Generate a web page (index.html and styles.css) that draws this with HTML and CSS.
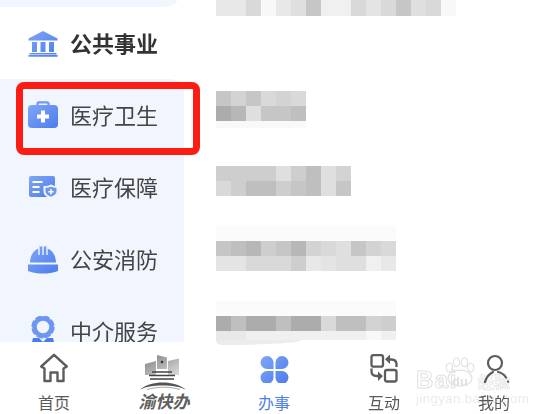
FILE: index.html
```html
<!DOCTYPE html>
<html lang="zh-CN">
<head>
<meta charset="utf-8">
<title>办事</title>
<link rel="stylesheet" href="styles.css">
</head>
<body>
<svg class="defs" width="0" height="0" aria-hidden="true">
  <defs>
    <linearGradient id="blue" x1="0" y1="0" x2="1" y2="1">
      <stop offset="0" stop-color="#7fa6f6"/>
      <stop offset="1" stop-color="#4c7cec"/>
    </linearGradient>
    <linearGradient id="grey" x1="0" y1="0" x2="1" y2="1">
      <stop offset="0" stop-color="#808080"/>
      <stop offset="1" stop-color="#dcdcdc"/>
    </linearGradient>
  </defs>
</svg>
<div class="app">
  <main class="main">
    <nav class="side">
      <div class="stub"></div>
      <a class="item item-active">
        <svg class="ico" viewBox="0 0 30 30"><path fill="url(#blue)" d="M15 3 29.500 10.500V12.500H.5V10.500ZM4 14h5v10H4ZM12.500 14h5v10h-5ZM21 14h5v10h-5ZM1.500 25h27v1.500h-27ZM.5 27h29v1.800H.5Z"/></svg>
        <span>公共事业</span>
      </a>
      <div class="rest">
        <a class="item">
          <svg class="ico" viewBox="0 0 30 30"><path fill="none" stroke="#6f98f3" stroke-width="2.200" d="M9.500 6V3.800a1.500 1.500 0 0 1 1.500-1.500h8a1.500 1.500 0 0 1 1.500 1.500V6"/><rect y="5" width="30" height="23" rx="4" fill="url(#blue)"/><path fill="#fff" d="M13 10.500h4v4h4v4h-4v4h-4v-4H9v-4h4Z"/></svg>
          <span>医疗卫生</span>
        </a>
        <a class="item">
          <svg class="ico" viewBox="0 0 30 30"><rect x="1" y="4" width="26" height="21" rx="2" fill="url(#blue)"/><path fill="#fff" d="M4.500 9h10v2h-10ZM4.500 14h7v2h-7ZM4.500 19h7v2h-7Z"/><path fill="#6d96f2" stroke="#f1f5fd" stroke-width="2" d="M23 13.500c2 1.500 4 1.500 6.500 1.500v4.500c0 3-3 5-6.500 6.500-3.500-1.500-6.500-3.500-6.500-6.500V15c2.500 0 4.500 0 6.500-1.500Z"/><path fill="#fff" d="M22.300 17h1.400v2h2v1.400h-2v2h-1.400v-2h-2V19h2Z"/></svg>
          <span>医疗保障</span>
        </a>
        <a class="item">
          <svg class="ico" viewBox="0 0 30 30"><path fill="url(#blue)" d="M2 18.500C2 11 6.500 5.500 11 4.500V2.500h8v2c4.500 1 9 6.500 9 14ZM0 20.500h30V27c-5 2-10 2.500-15 2.500S5 29 0 27Z"/><path stroke="#f1f5fd" stroke-width="1.400" d="M11 3v8M15 2v9M19 3v8"/></svg>
          <span>公安消防</span>
        </a>
        <a class="item">
          <svg class="ico" viewBox="0 0 30 30"><circle cx="15" cy="11" r="8.500" fill="none" stroke="#6d96f2" stroke-width="4.500"/><circle cx="15" cy="11" r="10.800" fill="none" stroke="#6d96f2" stroke-width="1.800" stroke-dasharray="6.500 2"/><path fill="#4c7cec" d="M5 22h6l4 4 4-4h6l2 8H3Z"/></svg>
          <span>中介服务</span>
        </a>
      </div>
    </nav>
    <section class="blurred" aria-label="已打码内容">
      <div class="row row-first"><i class="s10"></i><i class="s10"></i><i class="s7"></i><i class="s12"></i><i class="s10"></i><i class="s8"></i><i class="s4"></i><i class="s11"></i><i class="s11"></i><i class="s7"></i><i class="s9"></i><i class="s7"></i><i class="s4"></i><i class="s8"></i><i class="s7"></i><i class="s12"></i></div>
      <div class="row row-second"><i class="s4"></i><i class="s6"></i><i class="s4"></i><i class="s7"></i><i class="s6"></i><i class="s7"></i><i class="s1"></i><i class="s2"></i><i class="s8"></i><i class="s4"></i><i class="s4"></i><i class="s3"></i></div>
      <div class="row row-third"><i class="s5"></i><i class="s5"></i><i class="s5"></i><i class="s5"></i><i class="s8"></i><i class="s5"></i><i class="s3"></i><i class="s8"></i><i class="s6"></i><i class="s7"></i><i class="s5"></i><i class="s3"></i><i class="s3"></i><i class="s5"></i><i class="s4"></i><i class="s3"></i><i class="s8"></i><i class="s4"></i></div>
      <div class="row row-before"><i class="s4"></i><i class="s3"></i><i class="s2"></i><i class="s5"></i><i class="s4"></i><i class="s2"></i><i class="s6"></i><i class="s7"></i><i class="s8"></i><i class="s4"></i><i class="s6"></i><i class="s7"></i><i class="s9"></i><i class="s9"></i><i class="s7"></i><i class="s7"></i><i class="s7"></i><i class="s5"></i><i class="s10"></i><i class="s9"></i><i class="s8"></i><i class="s8"></i><i class="s11"></i><i class="s10"></i></div>
      <div class="row row-before row-last"><i class="s1"></i><i class="s3"></i><i class="s1"></i><i class="s1"></i><i class="s3"></i><i class="s1"></i><i class="s1"></i><i class="s7"></i><i class="s3"></i><i class="s3"></i><i class="s6"></i><i class="s5"></i></div>
      <div class="row row-thin"><i class="s10"></i><i class="s10"></i><i class="s11"></i><i class="s11"></i><i class="s11"></i><i class="s11"></i><i class="s11"></i><i class="s11"></i><i class="s11"></i><i class="s11"></i><i class="s12"></i><i class="s11"></i></div>
      <div class="tail"></div>
    </section>
  </main>
  <footer class="tabs">
    <a class="tab">
      <svg class="tab-ico" width="30" height="30" viewBox="0 0 30 30"><path fill="none" stroke="#5c5c5c" stroke-width="2.400" stroke-linejoin="round" d="M15 1.800 27.800 13.500 24.500 15.500V28H18.500V19.500H11.500V28H5.500V15.500L2.200 13.500Z"/></svg>
      <span class="tab-label">首页</span>
    </a>
    <a class="tab tab-logo">
      <svg class="logo" width="52" height="38" viewBox="0 0 52 38"><path fill="url(#grey)" d="M7 10 18 7V21H7ZM19 1 29 3.500V15H19ZM30 7 41 4.500V21H30Z"/><circle cx="24" cy="8" r="1.300" fill="#333"/><path fill="none" stroke="#444" stroke-width="1.600" d="M14 18h20M11 21.500h26M12 25h24"/><path fill="#555" d="M2 35.500C13 26 36 26 48 35.500 36 30 13 30 2 35.500Z"/><path fill="none" stroke="#aaa" d="M9 35.500C19 32.500 32 32.500 42 35.500"/></svg>
      <span class="logo-text">渝快办</span>
    </a>
    <a class="tab tab-active">
      <svg class="tab-ico" width="30" height="30" viewBox="0 0 30 30"><path fill="url(#blue)" d="M14 14H8A6.500 6.500 0 1 1 14 8ZM16 14V8A6.500 6.500 0 1 1 22 14ZM14 16V22A6.500 6.500 0 1 1 8 16ZM16 16H22A6.500 6.500 0 1 1 16 22Z" transform="translate(.5 2)"/></svg>
      <span class="tab-label">办事</span>
    </a>
    <a class="tab">
      <svg class="tab-ico" width="30" height="30" viewBox="0 0 30 30"><g fill="none" stroke="#5c5c5c" stroke-width="2.300" stroke-linejoin="round"><rect x="2.500" y="2.200" width="11.500" height="11.500" rx="2"/><rect x="16" y="17" width="11.500" height="11.500" rx="2"/><path d="M19 6.500h3.500c3 0 5 2 5 5V14"/><path d="M10 23H7.500c-3 0-5-2-5-5v-2.500"/></g><path fill="#5c5c5c" d="M21 1.500V11L16 6.200ZM9 18.500 14 23 9 28Z"/></svg>
      <span class="tab-label">互动</span>
    </a>
    <a class="tab">
      <svg class="tab-ico" width="30" height="30" viewBox="0 0 30 30"><g fill="none" stroke="#5c5c5c" stroke-width="2.200" stroke-linecap="round" transform="translate(3 1)"><circle cx="13" cy="9" r="7"/><path d="M3 28C4 24 7 20 11 18"/><path d="M16 18C19 18.500 22 20.500 24 23.500"/><path d="M26 27.500v.1"/></g></svg>
      <span class="tab-label">我的</span>
    </a>
  </footer>
  <div class="highlight"></div>
  <div class="watermark" aria-label="Baidu 经验">
    <span class="wm-bai">Bai</span>
    <svg class="wm-paw" width="30" height="30" viewBox="0 0 34 34"><g fill="none" stroke="#e2e2e2" stroke-width="1.400"><ellipse cx="5" cy="12" rx="3.500" ry="5"/><ellipse cx="13" cy="6" rx="3.500" ry="5"/><ellipse cx="22" cy="6" rx="3.500" ry="5"/><ellipse cx="29" cy="12" rx="3.500" ry="5"/><ellipse cx="17" cy="24" rx="13.500" ry="9"/></g></svg>
    <span class="wm-du">du</span>
    <span class="wm-jy">经验</span>
    <span class="wm-url">jingyan.baidu.com</span>
  </div>
</div>
</body>
</html>
```

FILE: styles.css
```css
* { box-sizing: border-box; }
html, body { margin: 0; padding: 0; background: #fff; }
.defs { position: absolute; }
.app {
  position: relative;
  width: 541px;
  height: 414px;
  overflow: hidden;
  display: flex;
  flex-direction: column;
  font-family: "Noto Sans CJK SC", "Noto Sans", sans-serif;
  color: #444;
}
.main { height: 345px; display: flex; overflow: hidden; }

.side { width: 184px; height: 342px; flex: none; overflow: hidden; filter: blur(.35px); }
.stub { width: 177px; height: 7px; background: #f1f5fd; border-bottom-right-radius: 14px 7px; }
.rest { background: #f1f5fd; border-top-right-radius: 14px; }
.item {
  height: 72px;
  display: flex;
  align-items: center;
  gap: 12px;
  padding-left: 28px;
  font-size: 22px;
  line-height: 30px;
}
.item span { margin-top: -2px; }
.item-active { font-weight: 700; color: #333; }
.ico { width: 30px; height: 30px; flex: none; }

.blurred { padding-left: 32px; flex: 1; }
.row {
  display: grid;
  grid-template-columns: repeat(var(--cols, 12), 15px);
  width: max-content;
  margin-top: 45px;
}
.row i { display: block; height: 15px; }
.row-first { margin-top: 0; --cols: 16; }
.row-first i { height: 16px; }
.row-second { margin-top: 75px; --cols: 6; box-shadow: 0 7px 0 #f9f9f9; }
.row-third { --cols: 9; }
.row-before { box-shadow: 0 -15px 0 #fbfbfb; }
.row-thin { margin-top: 0; }
.row-thin i { height: 9px; }
.tail {
  width: 85px;
  height: 5px;
  background: #ececec;
  border-radius: 0 0 100% 5px / 0 0 100% 5px;
}

.s1 { background: #acacac; } .s2 { background: #b7b7b7; } .s3 { background: #bfbfbf; }
.s4 { background: #c6c6c6; } .s5 { background: #cecece; } .s6 { background: #d3d3d3; }
.s7 { background: #d9d9d9; } .s8 { background: #dfdfdf; } .s9 { background: #e4e4e4; }
.s10 { background: #e8e8e8; } .s11 { background: #f0f0f0; } .s12 { background: #f8f8f8; }

.tabs {
  height: 69px;
  display: grid;
  grid-template-columns: repeat(5, 110px);
  margin-left: -1px;
  background: #fff;
  filter: blur(.35px);
}
.tab {
  display: flex;
  flex-direction: column;
  align-items: center;
  padding-top: 8px;
}
.tab-ico { display: block; flex: none; }
.tab-label { margin-top: 11px; font-size: 16px; line-height: 16px; color: #5a5a5a; }
.tab-active .tab-label { color: #4f7fe8; }
.tab-logo { padding-top: 9px; }
.logo { display: block; flex: none; }
.logo-text {
  font-size: 17px;
  line-height: 18px;
  font-weight: 700;
  font-style: italic;
  color: #5f5f5f;
}

.highlight {
  position: absolute;
  left: 16px;
  top: 82px;
  width: 184px;
  height: 73px;
  border: 7px solid #fb1c14;
  border-radius: 8px;
}

.watermark {
  position: absolute;
  left: 416px;
  top: 355px;
  width: 110px;
  height: 52px;
  mix-blend-mode: multiply;
}
.wm-bai, .wm-du, .wm-jy, .wm-url, .wm-paw { position: absolute; }
.wm-bai {
  left: 0;
  top: 11px;
  font: 700 24px/28px "Liberation Sans", sans-serif;
  color: #fff;
  -webkit-text-stroke: 1px #e2e2e2;
  letter-spacing: 1.500px;
}
.wm-paw { left: 29px; top: 2px; }
.wm-du { left: 36px; top: 19px; font: 700 13px/15px "Liberation Sans", sans-serif; color: #e0e0e0; }
.wm-jy {
  left: 62px;
  top: 18px;
  font-size: 16px;
  line-height: 16px;
  font-weight: 700;
  color: #fff;
  -webkit-text-stroke: .7px #e2e2e2;
}
.wm-url { left: 0; top: 37px; font: 400 13px/13px "Liberation Sans", sans-serif; letter-spacing: .5px; color: #ebebeb; }
```
